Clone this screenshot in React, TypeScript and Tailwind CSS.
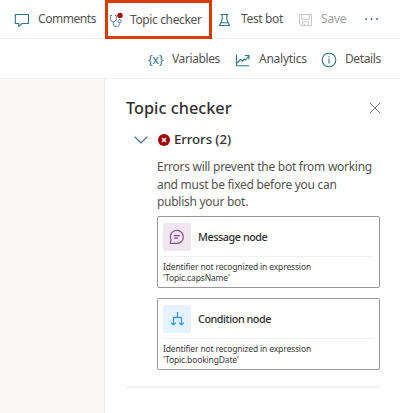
import type { ReactNode } from 'react';

const teal = '#2b7489';

function CommentIcon() {
  return (
    <svg className="relative top-px size-4 shrink-0" viewBox="0 0 16 16" fill="none" stroke={teal} strokeWidth="1.1">
      <path d="M1.3 2.5h13.2v9H8l-3.2 2.8v-2.8H1.3z" />
    </svg>
  );
}

function StethoscopeIcon() {
  return (
    <svg className="relative top-px size-4 shrink-0" viewBox="0 0 16 16" fill="none" stroke="#56799a" strokeWidth="1">
      <path d="M3 2.5H1.3v3.2c0 1.9 1.3 3.1 3 3.1s3-1.2 3-3.1V2.5H5.8M4.3 8.8v1.9c0 1.9 1.2 3 3 3s3.2-1.2 3.2-3V9.9" />
      <circle cx="10.6" cy="8.2" r="1.6" />
      <circle cx="11" cy="2.4" r="2.7" fill="#b1040e" stroke="none" />
    </svg>
  );
}

function FlaskIcon() {
  return (
    <svg className="relative top-px size-4 shrink-0" viewBox="0 0 16 16" fill="none" stroke={teal} strokeWidth="1.1">
      <path d="M3.5 2.5h8M5.2 2.5v5.2L2.5 13.5h10L9.8 7.7V2.5M4 10.8h7" />
    </svg>
  );
}

function SaveIcon() {
  return (
    <svg className="relative top-px size-4 shrink-0" viewBox="0 0 16 16" fill="none" stroke="#c8c6c4" strokeWidth="1">
      <path d="M1.5 2.5h12v11.2H3.3l-1.8-1.8zM3.8 2.5v4.8h7.4V2.5M4.5 13.5v-3.7h6v3.7M6.5 11.6v2" />
    </svg>
  );
}

function ChartIcon() {
  return (
    <svg className="relative top-px size-4 shrink-0" viewBox="0 0 16 16" fill="none" stroke={teal} strokeWidth="1.1">
      <path d="M1.5 2.5v11.2h12.8M2.2 11l3.4-3.6L7.4 9.2l2-2 1.3.8 3-4M9.9 3.5h4v3.9" />
    </svg>
  );
}

function InfoIcon() {
  return (
    <svg className="relative top-px size-4 shrink-0" viewBox="0 0 16 16" fill="none" stroke={teal} strokeWidth="1.1">
      <circle cx="8" cy="8" r="6.8" />
      <path d="M8 6.6v4.8M8 4.2v1.2" />
    </svg>
  );
}

function MessageIcon() {
  return (
    <svg className="size-4" viewBox="0 0 16 16" fill="none" stroke="#8a4b8f" strokeWidth="1.2">
      <path d="M1.2 14.4h6.7A6.5 6.5 0 1 0 2.1 11zM5.3 6.6h5.2M5.3 9.1h3.4" strokeLinejoin="round" strokeLinecap="round" />
    </svg>
  );
}

function BranchIcon() {
  return (
    <svg className="size-4" viewBox="0 0 16 16" fill="none" stroke="#3399ff" strokeWidth="1.3">
      <path d="M8.5 1v5.3M4.5 13.8V6.5h8v7.3M2.2 11.7l2.3 2.2 2.3-2.2M10.2 11.7l2.3 2.2 2.3-2.2" />
    </svg>
  );
}

function ErrorCard({ title, icon, tile, detail }: { title: string; icon: ReactNode; tile: string; detail: string }) {
  return (
    <article className="h-[72px] w-[223px] rounded-[2px] border border-[#999896] px-[5px] pt-[6px]">
      <div className="flex h-[34px] items-start border-b border-[#f0efee]">
        <div className={`flex size-7 items-center justify-center rounded-[2px] ${tile}`}>{icon}</div>
        <h3 className="ml-[7px] mt-[6px] whitespace-nowrap text-[10.8px] font-medium leading-4 tracking-[-0.45px] text-[#323130]">{title}</h3>
      </div>
      <p className="mt-[5px] whitespace-nowrap text-[8.5px] leading-[10.5px] tracking-[-0.15px] text-[#3b3a39]">
        Identifier not recognized in expression
        <br />
        {detail}
      </p>
    </article>
  );
}

export default function App() {
  return (
    <div className="h-[413px] w-[400px] overflow-hidden bg-white font-['Noto_Sans',sans-serif] text-[12px] text-[#555351]">
      <header className="flex h-[39px] items-center border-b border-[#f0f0f0] pl-[14px]">
        <div className="flex h-full w-[91px] items-center gap-2">
          <CommentIcon />
          <span className="whitespace-nowrap tracking-[-0.45px]">Comments</span>
        </div>
        <div className="flex h-[39px] w-[107px] shrink-0 items-center gap-[5px] self-start border-[3px] border-[#d83b01] pl-px">
          <StethoscopeIcon />
          <span className="whitespace-nowrap tracking-[-0.37px]">Topic checker</span>
        </div>
        <div className="ml-[5px] flex w-[81px] items-center gap-2">
          <FlaskIcon />
          <span className="whitespace-nowrap tracking-[-0.35px]">Test bot</span>
        </div>
        <div className="flex w-[66px] items-center gap-[7px] text-[#a19f9d]">
          <SaveIcon />
          <span className="tracking-[-0.2px]">Save</span>
        </div>
        <svg className="h-4 w-4" viewBox="0 0 16 16" fill="#406477">
          <circle cx="2" cy="8" r="0.9" />
          <circle cx="7.5" cy="8" r="0.9" />
          <circle cx="13" cy="8" r="0.9" />
        </svg>
      </header>

      <nav className="flex h-[40px] items-center border-b border-[#f0f0f0] pl-[148px]">
        <div className="flex w-[87px] items-center">
          <span className="relative top-px w-[24px] text-[12px] text-[#2b7489]">{'{x}'}</span>
          <span className="tracking-[-0.4px]">Variables</span>
        </div>
        <div className="flex w-[86px] items-center gap-2">
          <ChartIcon />
          <span className="tracking-[-0.25px]">Analytics</span>
        </div>
        <div className="flex items-center gap-2">
          <InfoIcon />
          <span className="tracking-[-0.4px]">Details</span>
        </div>
      </nav>

      <main className="flex h-[334px]">
        <div className="w-[105px] shrink-0 border-r border-[#edebe9] bg-[#faf9f8]" />
        <aside className="w-[295px] pl-[21px] pt-[17px]">
          <div className="flex h-6 items-center justify-between pr-[19px]">
            <h1 className="whitespace-nowrap text-[16.3px] font-medium leading-6 text-[#323130]">Topic checker</h1>
            <svg className="size-3" viewBox="0 0 12 12" fill="none" stroke="#7a7876">
              <path d="m.7.7 10.6 10.6M11.3.7.7 11.3" />
            </svg>
          </div>
          <section className="mt-2 pl-2">
            <div className="flex h-6 items-center">
              <svg className="h-2 w-[14px]" viewBox="0 0 14 8" fill="none" stroke="#3c6578" strokeWidth="1.2">
                <path d="m.6.6 6.4 6.4L13.4.6" />
              </svg>
              <svg className="ml-[10px] size-3" viewBox="0 0 12 12">
                <circle cx="6" cy="6" r="6" fill="#a80000" />
                <path d="m4 4 4 4m0-4L4 8" stroke="white" strokeWidth="1.6" />
              </svg>
              <h2 className="ml-1 whitespace-nowrap text-[13.3px] font-medium tracking-[-0.1px] text-[#323130]">Errors (2)</h2>
            </div>
            <p className="ml-[23px] mt-[6px] whitespace-nowrap text-[12px] leading-[17.5px] tracking-[-0.27px]">
              Errors will prevent the bot from working
              <br />
              and must be fixed before you can
              <br />
              publish your bot.
            </p>
            <div className="ml-[23px] mt-[5.5px] flex flex-col gap-[10px]">
              <ErrorCard title="Message node" icon={<MessageIcon />} tile="bg-[#efe6f0]" detail="'Topic.capsName'" />
              <ErrorCard title="Condition node" icon={<BranchIcon />} tile="bg-[#e6f2ff]" detail="'Topic.bookingDate'" />
            </div>
          </section>
          <hr className="mt-4 w-[254px] border-t-2 border-[#f3f2f1]" />
        </aside>
      </main>
    </div>
  );
}
